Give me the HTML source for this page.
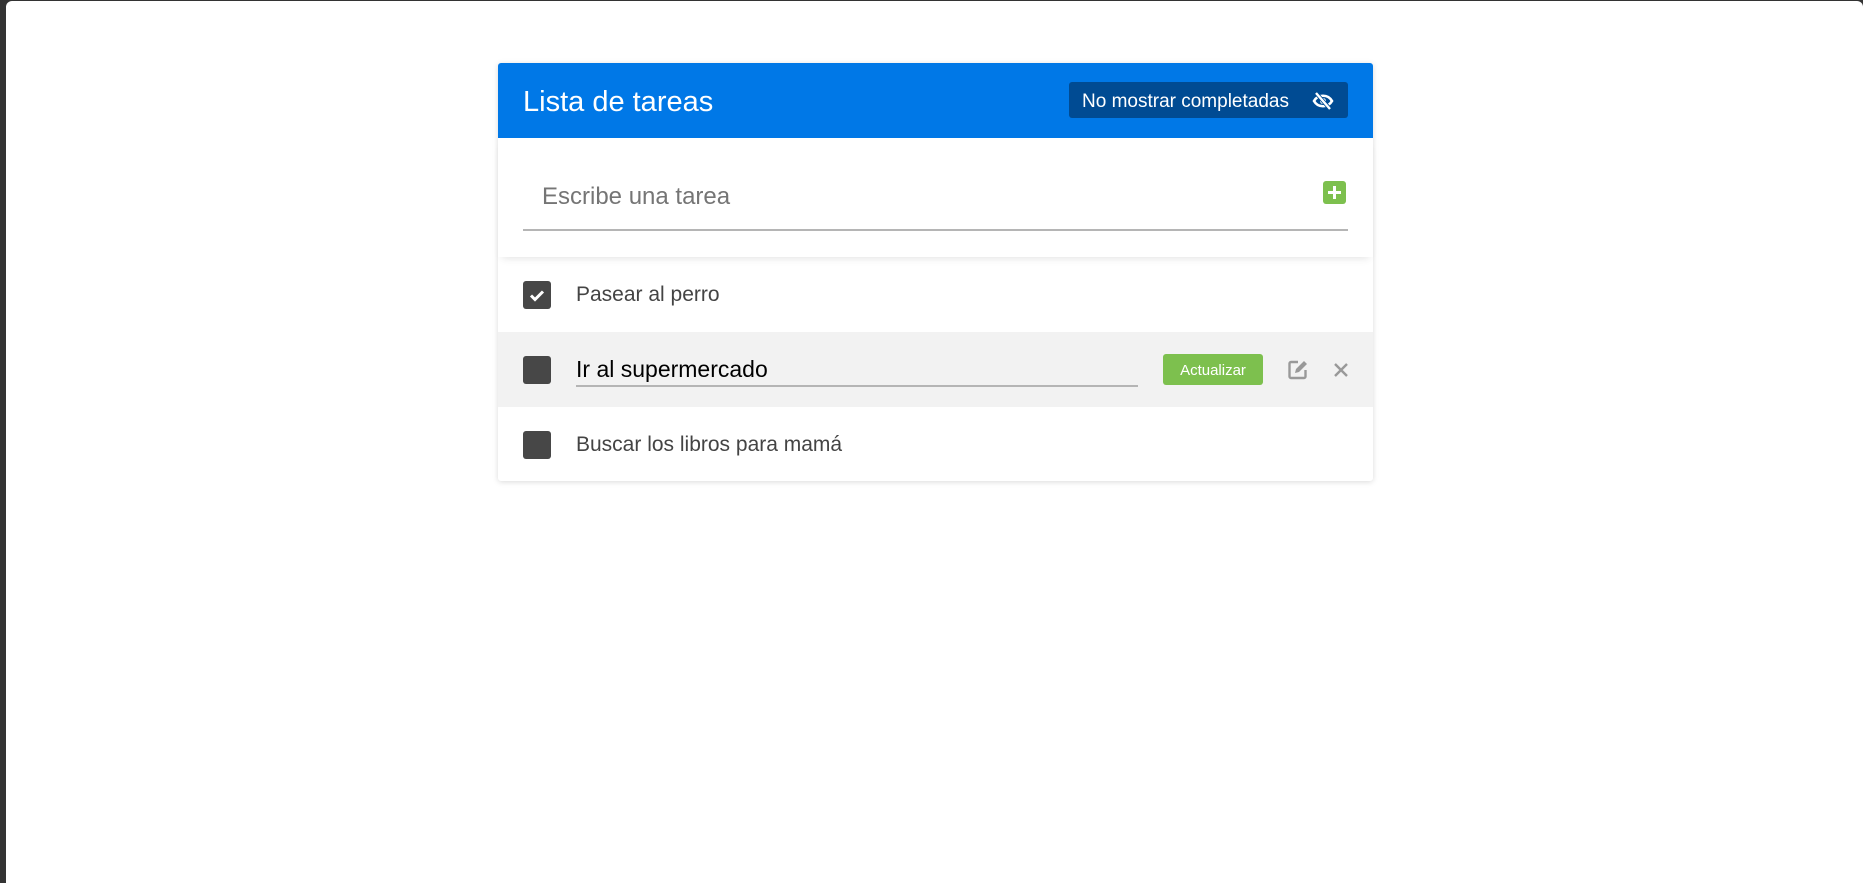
<!DOCTYPE html>
<html><head><meta charset="utf-8"><style>
html,body{margin:0;padding:0;width:1863px;height:883px;overflow:hidden;background:#333;font-family:"Liberation Sans",Roboto,sans-serif;}
.page{position:absolute;left:6px;top:1px;right:0;bottom:0;background:#fff;border-radius:6px 6px 0 0;}
.card{position:absolute;left:498px;top:63px;width:875px;height:418px;background:#fff;box-shadow:0 1px 6px rgba(0,0,0,.15);border-radius:3px;}
.hdr{height:75px;background:#0078e7;border-radius:3px 3px 0 0;position:relative;}
.hdr h1{position:absolute;left:25px;top:23px;margin:0;font-weight:normal;color:#fff;font-size:29px;}
.btn{position:absolute;left:571px;top:19px;width:279px;height:36px;background:#004b93;border-radius:3px;color:#fff;font-size:19px;line-height:40px;padding-left:13px;box-sizing:border-box;}
.btn svg{position:absolute;right:14px;top:10px;}
.inp{height:119px;position:relative;box-shadow:0 5px 8px -4px rgba(0,0,0,.12);}
.inp .ph{position:absolute;left:44px;top:45px;color:#757575;font-size:24px;}
.inp .ln{position:absolute;left:25px;right:25px;top:91px;height:2px;background:#b5b5b5;}
.plus{position:absolute;left:825px;}
.row{height:75px;position:relative;}
.cb{position:absolute;left:25px;top:24px;width:28px;height:28px;border-radius:3px;background:#474747;}
.row .t{position:absolute;left:78px;top:26px;font-size:21px;color:#444;}
.row2{background:#f2f2f2;}
.row2 .t{color:#000;font-size:23px;top:24px;}
.row2 .ul{position:absolute;left:78px;top:53px;width:562px;height:2px;background:#b5b5b5;}
.act{position:absolute;left:665px;top:22px;width:100px;height:31px;background:#7dc04e;border-radius:3px;color:#fff;font-size:15px;text-align:center;line-height:33px;}
</style></head><body>
<div class="page"></div>
<div class="card">
 <div class="hdr"><h1>Lista de tareas</h1>
  <div class="btn">No mostrar completadas
   <svg width="22" height="18" viewBox="0 0 22 18"><path d="M2 9 C6 2,16 2,20 9 C16 16,6 16,2 9Z" fill="none" stroke="#fff" stroke-width="2.6"/><circle cx="11" cy="9" r="3" fill="#fff"/><line x1="4" y1="1" x2="18" y2="17" stroke="#004b93" stroke-width="4"/><line x1="4" y1="1" x2="18" y2="17" stroke="#fff" stroke-width="2.4"/></svg>
  </div>
 </div>
 <div class="inp"><div class="ph">Escribe una tarea</div><div class="ln"></div>
  <svg class="plus" width="23" height="23" viewBox="0 0 23 23" style="top:43px"><rect width="23" height="23" rx="3" fill="#7dc04e"/><path d="M11.5 5v13M5 11.5h13" stroke="#fff" stroke-width="3"/></svg>
 </div>
 <div class="row"><div class="cb"><svg width="28" height="28" viewBox="0 0 28 28"><path d="M8 14.5l4 4 8-8" fill="none" stroke="#fff" stroke-width="3"/></svg></div><div class="t">Pasear al perro</div></div>
 <div class="row row2"><div class="cb"></div><div class="t">Ir al supermercado</div><div class="ul"></div>
  <div class="act">Actualizar</div>
  <svg style="position:absolute;left:789px;top:27px" width="22" height="22" viewBox="0 0 22 22"><path d="M11 3H4a1.5 1.5 0 0 0-1.5 1.5v13A1.5 1.5 0 0 0 4 19h13a1.5 1.5 0 0 0 1.5-1.5V11" fill="none" stroke="#999" stroke-width="2.4"/><path d="M8 14l1-4 8-8 3 3-8 8z" fill="#999"/></svg>
  <svg style="position:absolute;left:835px;top:30px" width="16" height="16" viewBox="0 0 16 16"><path d="M2 2l12 12M14 2L2 14" stroke="#999" stroke-width="2.4"/></svg>
 </div>
 <div class="row"><div class="cb"></div><div class="t">Buscar los libros para mamá</div></div>
</div>
</body></html>
